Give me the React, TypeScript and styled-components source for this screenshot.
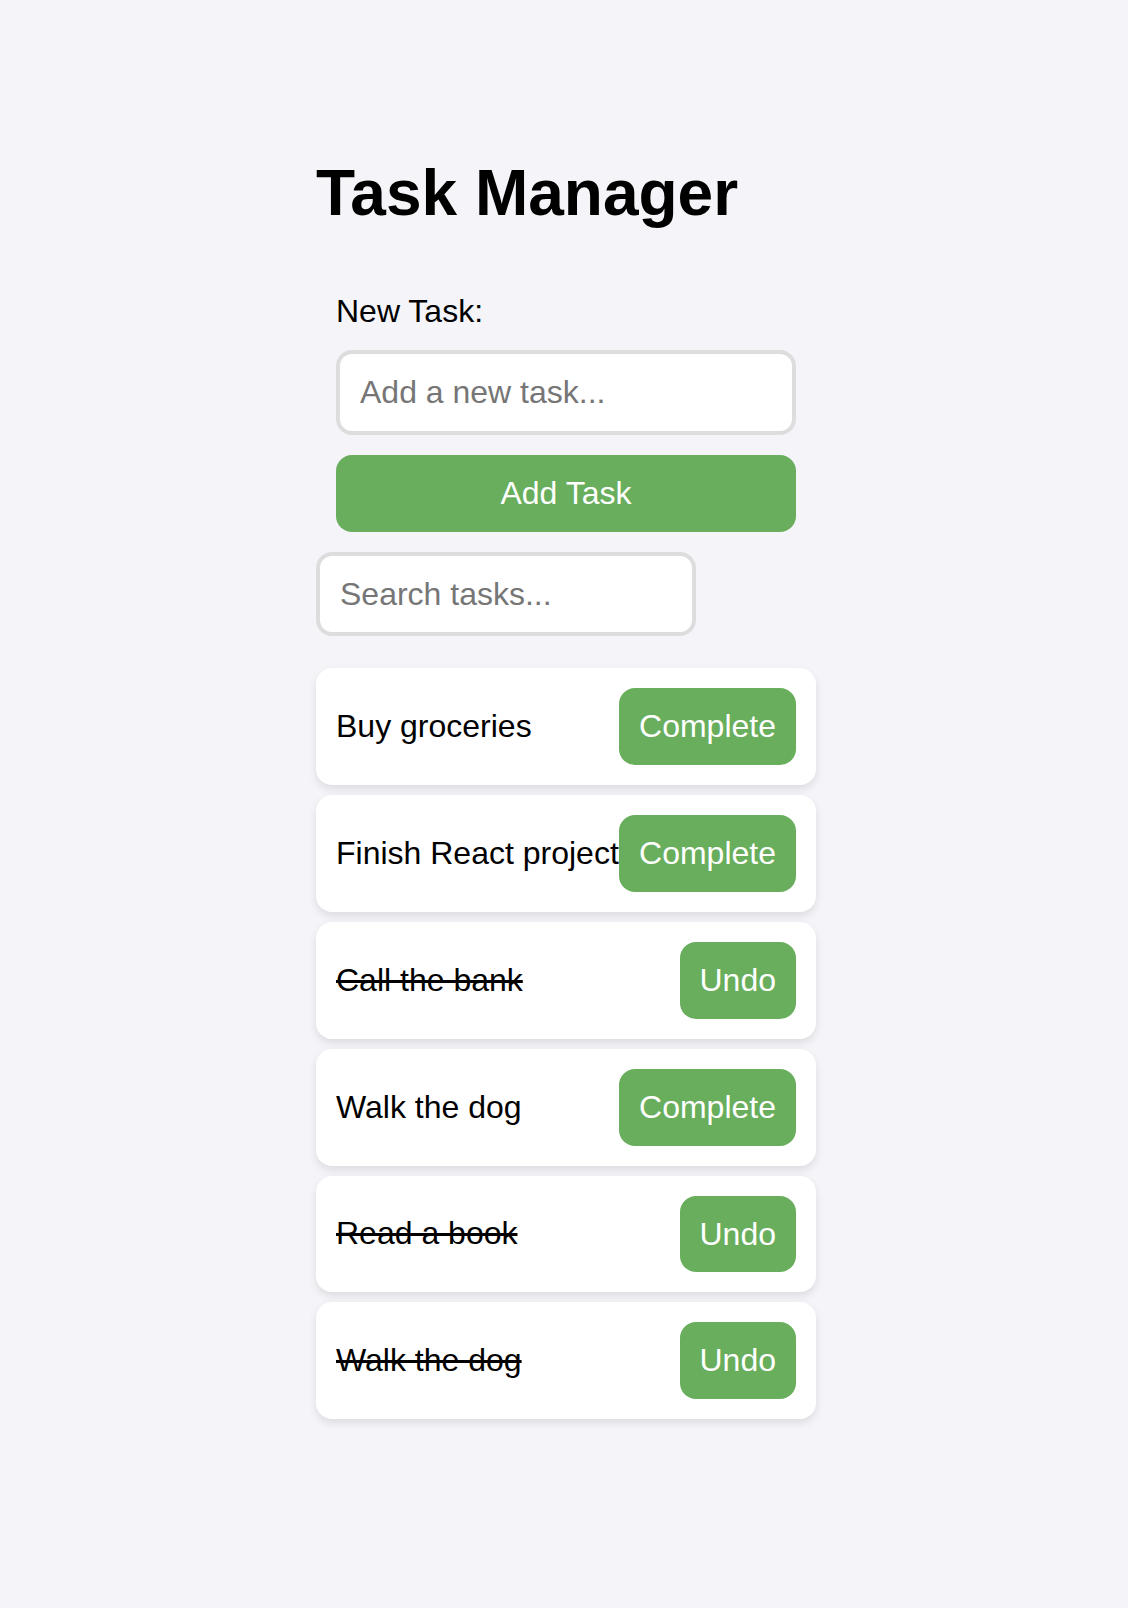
import React, { useState } from "react";
import styled, { createGlobalStyle } from "styled-components";

const GlobalStyle = createGlobalStyle`
  html, body {
    margin: 0;
    padding: 0;
    background: #f4f4f9;
    font-family: "Liberation Sans", Arial, sans-serif;
    color: #000;
  }
  * { box-sizing: border-box; }
`;

const Page = styled.div`
  min-height: 1608px;
  padding: 156px 0 100px 4px;
`;

const Container = styled.div`
  width: 500px;
  margin: 0 auto;
`;

const Title = styled.h1`
  font-size: 64px;
  font-weight: 700;
  line-height: normal;
  margin: 0 0 43px;
`;

const Form = styled.form`
  display: flex;
  flex-direction: column;
  gap: 20px;
  padding: 20px;
`;

const Label = styled.label`
  font-size: 32px;
  line-height: normal;
`;

const TextInput = styled.input<{ $width?: number }>`
  width: ${(p) => (p.$width ? `${p.$width}px` : "100%")};
  font-family: "Liberation Sans", Arial, sans-serif;
  font-size: 32px;
  line-height: 36.8px;
  padding: 20px;
  border: 4px solid #dddddd;
  border-radius: 16px;
  background: #fff;
  color: #000;
  outline: none;
  display: block;
  &::placeholder {
    color: #767676;
  }
`;

const GreenButton = styled.button<{ $block?: boolean }>`
  ${(p) => (p.$block ? "width: 100%;" : "flex-shrink: 0;")}
  font-family: "Liberation Sans", Arial, sans-serif;
  font-size: 32px;
  line-height: 36.8px;
  padding: 20px;
  border: none;
  border-radius: 16px;
  background: #68ae5c;
  color: #fff;
  cursor: pointer;
  white-space: nowrap;
`;

const List = styled.ul`
  list-style: none;
  margin: 32px 0 0;
  padding: 0;
  display: flex;
  flex-direction: column;
  gap: 10px;
`;

const Card = styled.li`
  display: flex;
  align-items: center;
  justify-content: space-between;
  padding: 20px;
  background: #fff;
  border-radius: 16px;
  box-shadow: 0 4px 8px rgba(0, 0, 0, 0.1);
`;

const TaskText = styled.span<{ $done: boolean }>`
  font-size: 32px;
  line-height: normal;
  white-space: nowrap;
  text-decoration: ${(p) => (p.$done ? "line-through" : "none")};
`;

type Task = { id: number; text: string; done: boolean };

const initial: Task[] = [
  { id: 1, text: "Buy groceries", done: false },
  { id: 2, text: "Finish React project", done: false },
  { id: 3, text: "Call the bank", done: true },
  { id: 4, text: "Walk the dog", done: false },
  { id: 5, text: "Read a book", done: true },
  { id: 6, text: "Walk the dog", done: true },
];

export default function App() {
  const [tasks, setTasks] = useState<Task[]>(initial);
  const [text, setText] = useState("");
  const [query, setQuery] = useState("");

  const add = (e: React.FormEvent) => {
    e.preventDefault();
    if (!text.trim()) return;
    setTasks([...tasks, { id: Date.now(), text: text.trim(), done: false }]);
    setText("");
  };

  const toggle = (id: number) =>
    setTasks(tasks.map((t) => (t.id === id ? { ...t, done: !t.done } : t)));

  const shown = tasks.filter((t) =>
    t.text.toLowerCase().includes(query.toLowerCase())
  );

  return (
    <>
      <GlobalStyle />
      <Page>
        <Container>
          <Title>Task Manager</Title>
          <Form onSubmit={add}>
            <Label htmlFor="new-task">New Task:</Label>
            <TextInput
              id="new-task"
              placeholder="Add a new task..."
              value={text}
              onChange={(e) => setText(e.target.value)}
            />
            <GreenButton type="submit" $block>
              Add Task
            </GreenButton>
          </Form>
          <TextInput
            $width={380}
            placeholder="Search tasks..."
            value={query}
            onChange={(e) => setQuery(e.target.value)}
          />
          <List>
            {shown.map((t) => (
              <Card key={t.id}>
                <TaskText $done={t.done}>{t.text}</TaskText>
                <GreenButton onClick={() => toggle(t.id)}>
                  {t.done ? "Undo" : "Complete"}
                </GreenButton>
              </Card>
            ))}
          </List>
        </Container>
      </Page>
    </>
  );
}
